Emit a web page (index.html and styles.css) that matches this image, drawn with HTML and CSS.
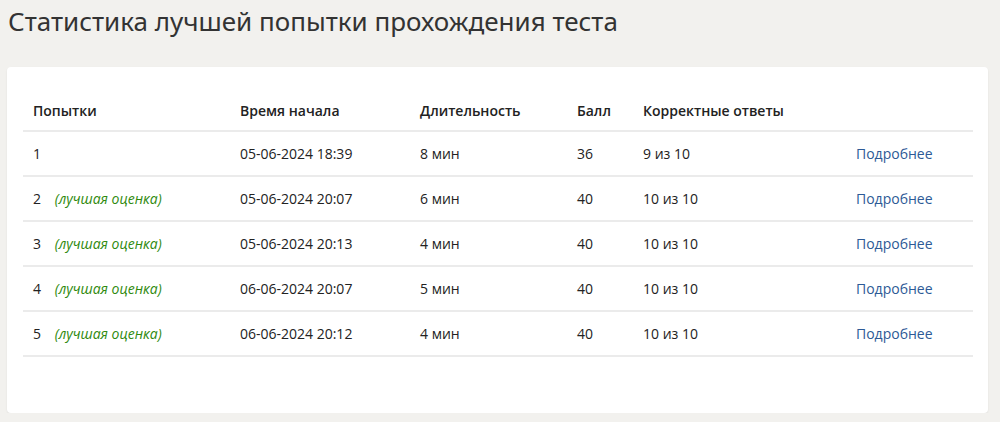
FILE: index.html
```html
<!DOCTYPE html>
<html lang="ru">
<head>
<meta charset="utf-8">
<link rel="stylesheet" href="styles.css">
</head>
<body>
<h1 class="title">Статистика лучшей попытки прохождения теста</h1>
<div class="card">
  <table class="stats">
    <thead>
      <tr>
        <th class="c1">Попытки</th>
        <th class="c2">Время начала</th>
        <th class="c3">Длительность</th>
        <th class="c4">Балл</th>
        <th class="c5">Корректные ответы</th>
        <th class="c6"></th>
      </tr>
    </thead>
    <tbody>
      <tr>
        <td>1</td>
        <td>05-06-2024 18:39</td>
        <td>8 мин</td>
        <td>36</td>
        <td>9 из 10</td>
        <td><a class="more" href="#">Подробнее</a></td>
      </tr>
      <tr>
        <td>2 <span class="best">(лучшая оценка)</span></td>
        <td>05-06-2024 20:07</td>
        <td>6 мин</td>
        <td>40</td>
        <td>10 из 10</td>
        <td><a class="more" href="#">Подробнее</a></td>
      </tr>
      <tr>
        <td>3 <span class="best">(лучшая оценка)</span></td>
        <td>05-06-2024 20:13</td>
        <td>4 мин</td>
        <td>40</td>
        <td>10 из 10</td>
        <td><a class="more" href="#">Подробнее</a></td>
      </tr>
      <tr>
        <td>4 <span class="best">(лучшая оценка)</span></td>
        <td>06-06-2024 20:07</td>
        <td>5 мин</td>
        <td>40</td>
        <td>10 из 10</td>
        <td><a class="more" href="#">Подробнее</a></td>
      </tr>
      <tr>
        <td>5 <span class="best">(лучшая оценка)</span></td>
        <td>06-06-2024 20:12</td>
        <td>4 мин</td>
        <td>40</td>
        <td>10 из 10</td>
        <td><a class="more" href="#">Подробнее</a></td>
      </tr>
    </tbody>
  </table>
</div>
</body>
</html>
```
FILE: styles.css
```css
html, body {
  margin: 0;
  padding: 0;
  background: #f2f1ee;
}
body {
  font-family: "Open Sans", "Noto Sans", sans-serif;
  color: #222;
  padding: 0 12px 0 7px;
}
.title {
  margin: 0;
  padding: 2px 0 0 1px;
  height: 65px;
  font-family: "Noto Sans", sans-serif;
  font-weight: 400;
  font-size: 26px;
  line-height: 38px;
  color: #333;
}
.card {
  background: #fff;
  border-radius: 4px;
  box-shadow: 0 1px 2px rgba(0,0,0,0.08);
  padding: 23px 15px 57px 16px;
  height: 346px;
  box-sizing: border-box;
}
.stats {
  width: 950px;
  border-collapse: collapse;
  font-size: 14px;
}
.stats th, .stats td {
  text-align: left;
  padding: 0 10px;
  border-bottom: 2px solid #ebebeb;
}
.stats th {
  font-weight: 600;
  height: 40px;
  vertical-align: middle;
}
.stats td {
  height: 43px;
}
.c1 { width: 187px; }
.c2 { width: 160px; }
.c3 { width: 137px; }
.c4 { width: 46px; }
.c5 { width: 193px; }
.best {
  color: #2f8a0e;
  font-style: italic;
  margin-left: 10px;
}
.more {
  color: #2d5a96;
  text-decoration: none;
}
```
